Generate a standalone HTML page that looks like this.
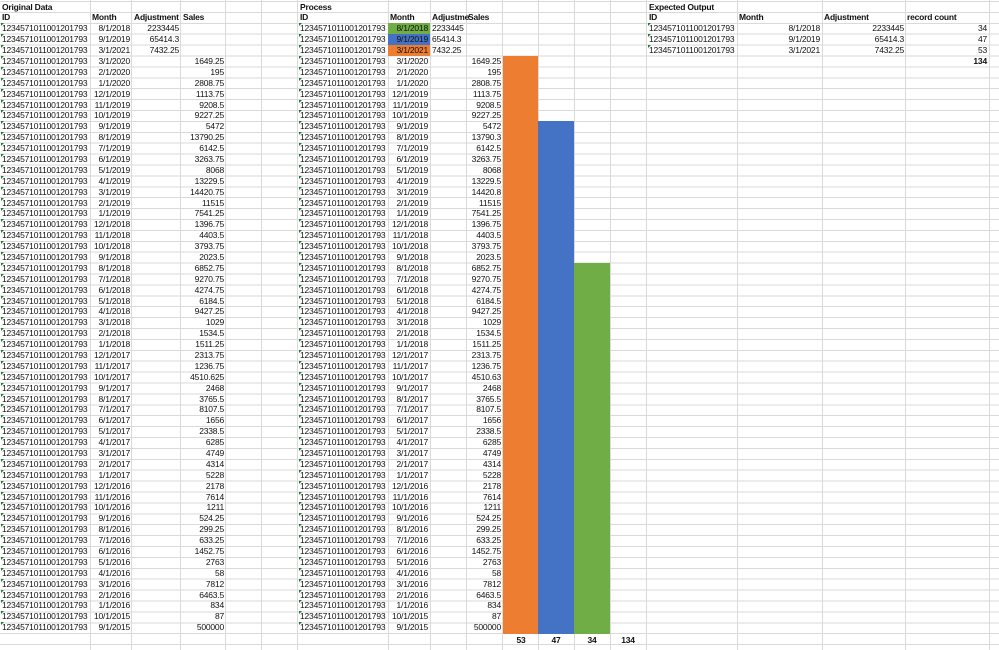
<!DOCTYPE html>
<html><head><meta charset="utf-8"><style>
*{margin:0;padding:0;box-sizing:border-box}
body{width:999px;height:650px;overflow:hidden;background:#fff;position:relative;font-family:"Liberation Sans",Arial,sans-serif;font-size:8.5px;color:#111;letter-spacing:-0.2px}
#grid{position:absolute;left:0;top:0;width:999px;height:650px;background-image:repeating-linear-gradient(to bottom,#dadada 0 1px,transparent 1px 10.9px);background-position:0 1px}
.v{position:absolute;top:0;width:1px;height:650px;background:#dadada}
.bar{position:absolute}
#rows{position:absolute;left:0;top:1.5px;width:999px}
.r{position:relative;height:10.9px;line-height:11px}
.r i{position:absolute;font-style:normal;white-space:nowrap;top:0}
.a{left:2px}.g{left:300px}.o{left:649px}
.a::before,.g::before,.o::before{content:"";position:absolute;left:-1px;top:0;border-top:3px solid #1e7b34;border-right:3px solid transparent}
.b{right:869px}.c{right:820px}.d{right:775px}
.h{right:571px}.i{left:432px}.j{right:498px}
.p{right:179px}.q{right:95px}.s{right:12px}
.bd{font-weight:bold}
.cell{position:absolute;top:0;height:10.9px}
.t{position:absolute;font-weight:bold;width:36px;text-align:center}
</style></head><body>
<div id="grid"></div>
<div class="v" style="left:90px"></div><div class="v" style="left:131px"></div><div class="v" style="left:180px"></div><div class="v" style="left:225px"></div><div class="v" style="left:261px"></div><div class="v" style="left:297px"></div><div class="v" style="left:388px"></div><div class="v" style="left:430px"></div><div class="v" style="left:466px"></div><div class="v" style="left:502px"></div><div class="v" style="left:538px"></div><div class="v" style="left:574px"></div><div class="v" style="left:610px"></div><div class="v" style="left:646px"></div><div class="v" style="left:737px"></div><div class="v" style="left:822px"></div><div class="v" style="left:905px"></div><div class="v" style="left:989px"></div>
<div class="bar" style="left:388px;top:23.3px;width:42px;height:10.9px;background:#70ad47"></div>
<div class="bar" style="left:388px;top:34.2px;width:42px;height:10.9px;background:#4472c4"></div>
<div class="bar" style="left:388px;top:45.1px;width:42px;height:10.9px;background:#ed7d31"></div>
<div class="bar" style="left:503px;top:56px;width:35px;height:578px;background:#ed7d31"></div>
<div class="bar" style="left:538px;top:121.4px;width:36px;height:512.6px;background:#4472c4"></div>
<div class="bar" style="left:574px;top:263px;width:36px;height:371px;background:#70ad47"></div>
<div id="rows">
<div class="r"><i class="bd" style="left:2px">Original Data</i><i class="bd" style="left:300px">Process</i><i class="bd" style="left:649px">Expected Output</i></div>
<div class="r"><i class="bd" style="left:2px">ID</i><i class="bd" style="left:92px">Month</i><i class="bd" style="left:134px">Adjustment</i><i class="bd" style="left:183px">Sales</i><i class="bd" style="left:300px">ID</i><i class="bd" style="left:390px">Month</i><i class="bd" style="left:432px">Adjustme</i><i class="bd" style="left:468px">Sales</i><i class="bd" style="left:649px">ID</i><i class="bd" style="left:739px">Month</i><i class="bd" style="left:824px">Adjustment</i><i class="bd" style="left:907px">record count</i></div>
<div class="r"><i class="a">1234571011001201793</i><i class="b">8/1/2018</i><i class="c">2233445</i><i class="g">1234571011001201793</i><i class="h">8/1/2018</i><i class="i">2233445</i><i class="o">1234571011001201793</i><i class="p">8/1/2018</i><i class="q">2233445</i><i class="s">34</i></div>
<div class="r"><i class="a">1234571011001201793</i><i class="b">9/1/2019</i><i class="c">65414.3</i><i class="g">1234571011001201793</i><i class="h">9/1/2019</i><i class="i">65414.3</i><i class="o">1234571011001201793</i><i class="p">9/1/2019</i><i class="q">65414.3</i><i class="s">47</i></div>
<div class="r"><i class="a">1234571011001201793</i><i class="b">3/1/2021</i><i class="c">7432.25</i><i class="g">1234571011001201793</i><i class="h">3/1/2021</i><i class="i">7432.25</i><i class="o">1234571011001201793</i><i class="p">3/1/2021</i><i class="q">7432.25</i><i class="s">53</i></div>
<div class="r"><i class="a">1234571011001201793</i><i class="b">3/1/2020</i><i class="d">1649.25</i><i class="g">1234571011001201793</i><i class="h">3/1/2020</i><i class="j">1649.25</i><i class="s bd">134</i></div>
<div class="r"><i class="a">1234571011001201793</i><i class="b">2/1/2020</i><i class="d">195</i><i class="g">1234571011001201793</i><i class="h">2/1/2020</i><i class="j">195</i></div>
<div class="r"><i class="a">1234571011001201793</i><i class="b">1/1/2020</i><i class="d">2808.75</i><i class="g">1234571011001201793</i><i class="h">1/1/2020</i><i class="j">2808.75</i></div>
<div class="r"><i class="a">1234571011001201793</i><i class="b">12/1/2019</i><i class="d">1113.75</i><i class="g">1234571011001201793</i><i class="h">12/1/2019</i><i class="j">1113.75</i></div>
<div class="r"><i class="a">1234571011001201793</i><i class="b">11/1/2019</i><i class="d">9208.5</i><i class="g">1234571011001201793</i><i class="h">11/1/2019</i><i class="j">9208.5</i></div>
<div class="r"><i class="a">1234571011001201793</i><i class="b">10/1/2019</i><i class="d">9227.25</i><i class="g">1234571011001201793</i><i class="h">10/1/2019</i><i class="j">9227.25</i></div>
<div class="r"><i class="a">1234571011001201793</i><i class="b">9/1/2019</i><i class="d">5472</i><i class="g">1234571011001201793</i><i class="h">9/1/2019</i><i class="j">5472</i></div>
<div class="r"><i class="a">1234571011001201793</i><i class="b">8/1/2019</i><i class="d">13790.25</i><i class="g">1234571011001201793</i><i class="h">8/1/2019</i><i class="j">13790.3</i></div>
<div class="r"><i class="a">1234571011001201793</i><i class="b">7/1/2019</i><i class="d">6142.5</i><i class="g">1234571011001201793</i><i class="h">7/1/2019</i><i class="j">6142.5</i></div>
<div class="r"><i class="a">1234571011001201793</i><i class="b">6/1/2019</i><i class="d">3263.75</i><i class="g">1234571011001201793</i><i class="h">6/1/2019</i><i class="j">3263.75</i></div>
<div class="r"><i class="a">1234571011001201793</i><i class="b">5/1/2019</i><i class="d">8068</i><i class="g">1234571011001201793</i><i class="h">5/1/2019</i><i class="j">8068</i></div>
<div class="r"><i class="a">1234571011001201793</i><i class="b">4/1/2019</i><i class="d">13229.5</i><i class="g">1234571011001201793</i><i class="h">4/1/2019</i><i class="j">13229.5</i></div>
<div class="r"><i class="a">1234571011001201793</i><i class="b">3/1/2019</i><i class="d">14420.75</i><i class="g">1234571011001201793</i><i class="h">3/1/2019</i><i class="j">14420.8</i></div>
<div class="r"><i class="a">1234571011001201793</i><i class="b">2/1/2019</i><i class="d">11515</i><i class="g">1234571011001201793</i><i class="h">2/1/2019</i><i class="j">11515</i></div>
<div class="r"><i class="a">1234571011001201793</i><i class="b">1/1/2019</i><i class="d">7541.25</i><i class="g">1234571011001201793</i><i class="h">1/1/2019</i><i class="j">7541.25</i></div>
<div class="r"><i class="a">1234571011001201793</i><i class="b">12/1/2018</i><i class="d">1396.75</i><i class="g">1234571011001201793</i><i class="h">12/1/2018</i><i class="j">1396.75</i></div>
<div class="r"><i class="a">1234571011001201793</i><i class="b">11/1/2018</i><i class="d">4403.5</i><i class="g">1234571011001201793</i><i class="h">11/1/2018</i><i class="j">4403.5</i></div>
<div class="r"><i class="a">1234571011001201793</i><i class="b">10/1/2018</i><i class="d">3793.75</i><i class="g">1234571011001201793</i><i class="h">10/1/2018</i><i class="j">3793.75</i></div>
<div class="r"><i class="a">1234571011001201793</i><i class="b">9/1/2018</i><i class="d">2023.5</i><i class="g">1234571011001201793</i><i class="h">9/1/2018</i><i class="j">2023.5</i></div>
<div class="r"><i class="a">1234571011001201793</i><i class="b">8/1/2018</i><i class="d">6852.75</i><i class="g">1234571011001201793</i><i class="h">8/1/2018</i><i class="j">6852.75</i></div>
<div class="r"><i class="a">1234571011001201793</i><i class="b">7/1/2018</i><i class="d">9270.75</i><i class="g">1234571011001201793</i><i class="h">7/1/2018</i><i class="j">9270.75</i></div>
<div class="r"><i class="a">1234571011001201793</i><i class="b">6/1/2018</i><i class="d">4274.75</i><i class="g">1234571011001201793</i><i class="h">6/1/2018</i><i class="j">4274.75</i></div>
<div class="r"><i class="a">1234571011001201793</i><i class="b">5/1/2018</i><i class="d">6184.5</i><i class="g">1234571011001201793</i><i class="h">5/1/2018</i><i class="j">6184.5</i></div>
<div class="r"><i class="a">1234571011001201793</i><i class="b">4/1/2018</i><i class="d">9427.25</i><i class="g">1234571011001201793</i><i class="h">4/1/2018</i><i class="j">9427.25</i></div>
<div class="r"><i class="a">1234571011001201793</i><i class="b">3/1/2018</i><i class="d">1029</i><i class="g">1234571011001201793</i><i class="h">3/1/2018</i><i class="j">1029</i></div>
<div class="r"><i class="a">1234571011001201793</i><i class="b">2/1/2018</i><i class="d">1534.5</i><i class="g">1234571011001201793</i><i class="h">2/1/2018</i><i class="j">1534.5</i></div>
<div class="r"><i class="a">1234571011001201793</i><i class="b">1/1/2018</i><i class="d">1511.25</i><i class="g">1234571011001201793</i><i class="h">1/1/2018</i><i class="j">1511.25</i></div>
<div class="r"><i class="a">1234571011001201793</i><i class="b">12/1/2017</i><i class="d">2313.75</i><i class="g">1234571011001201793</i><i class="h">12/1/2017</i><i class="j">2313.75</i></div>
<div class="r"><i class="a">1234571011001201793</i><i class="b">11/1/2017</i><i class="d">1236.75</i><i class="g">1234571011001201793</i><i class="h">11/1/2017</i><i class="j">1236.75</i></div>
<div class="r"><i class="a">1234571011001201793</i><i class="b">10/1/2017</i><i class="d">4510.625</i><i class="g">1234571011001201793</i><i class="h">10/1/2017</i><i class="j">4510.63</i></div>
<div class="r"><i class="a">1234571011001201793</i><i class="b">9/1/2017</i><i class="d">2468</i><i class="g">1234571011001201793</i><i class="h">9/1/2017</i><i class="j">2468</i></div>
<div class="r"><i class="a">1234571011001201793</i><i class="b">8/1/2017</i><i class="d">3765.5</i><i class="g">1234571011001201793</i><i class="h">8/1/2017</i><i class="j">3765.5</i></div>
<div class="r"><i class="a">1234571011001201793</i><i class="b">7/1/2017</i><i class="d">8107.5</i><i class="g">1234571011001201793</i><i class="h">7/1/2017</i><i class="j">8107.5</i></div>
<div class="r"><i class="a">1234571011001201793</i><i class="b">6/1/2017</i><i class="d">1656</i><i class="g">1234571011001201793</i><i class="h">6/1/2017</i><i class="j">1656</i></div>
<div class="r"><i class="a">1234571011001201793</i><i class="b">5/1/2017</i><i class="d">2338.5</i><i class="g">1234571011001201793</i><i class="h">5/1/2017</i><i class="j">2338.5</i></div>
<div class="r"><i class="a">1234571011001201793</i><i class="b">4/1/2017</i><i class="d">6285</i><i class="g">1234571011001201793</i><i class="h">4/1/2017</i><i class="j">6285</i></div>
<div class="r"><i class="a">1234571011001201793</i><i class="b">3/1/2017</i><i class="d">4749</i><i class="g">1234571011001201793</i><i class="h">3/1/2017</i><i class="j">4749</i></div>
<div class="r"><i class="a">1234571011001201793</i><i class="b">2/1/2017</i><i class="d">4314</i><i class="g">1234571011001201793</i><i class="h">2/1/2017</i><i class="j">4314</i></div>
<div class="r"><i class="a">1234571011001201793</i><i class="b">1/1/2017</i><i class="d">5228</i><i class="g">1234571011001201793</i><i class="h">1/1/2017</i><i class="j">5228</i></div>
<div class="r"><i class="a">1234571011001201793</i><i class="b">12/1/2016</i><i class="d">2178</i><i class="g">1234571011001201793</i><i class="h">12/1/2016</i><i class="j">2178</i></div>
<div class="r"><i class="a">1234571011001201793</i><i class="b">11/1/2016</i><i class="d">7614</i><i class="g">1234571011001201793</i><i class="h">11/1/2016</i><i class="j">7614</i></div>
<div class="r"><i class="a">1234571011001201793</i><i class="b">10/1/2016</i><i class="d">1211</i><i class="g">1234571011001201793</i><i class="h">10/1/2016</i><i class="j">1211</i></div>
<div class="r"><i class="a">1234571011001201793</i><i class="b">9/1/2016</i><i class="d">524.25</i><i class="g">1234571011001201793</i><i class="h">9/1/2016</i><i class="j">524.25</i></div>
<div class="r"><i class="a">1234571011001201793</i><i class="b">8/1/2016</i><i class="d">299.25</i><i class="g">1234571011001201793</i><i class="h">8/1/2016</i><i class="j">299.25</i></div>
<div class="r"><i class="a">1234571011001201793</i><i class="b">7/1/2016</i><i class="d">633.25</i><i class="g">1234571011001201793</i><i class="h">7/1/2016</i><i class="j">633.25</i></div>
<div class="r"><i class="a">1234571011001201793</i><i class="b">6/1/2016</i><i class="d">1452.75</i><i class="g">1234571011001201793</i><i class="h">6/1/2016</i><i class="j">1452.75</i></div>
<div class="r"><i class="a">1234571011001201793</i><i class="b">5/1/2016</i><i class="d">2763</i><i class="g">1234571011001201793</i><i class="h">5/1/2016</i><i class="j">2763</i></div>
<div class="r"><i class="a">1234571011001201793</i><i class="b">4/1/2016</i><i class="d">58</i><i class="g">1234571011001201793</i><i class="h">4/1/2016</i><i class="j">58</i></div>
<div class="r"><i class="a">1234571011001201793</i><i class="b">3/1/2016</i><i class="d">7812</i><i class="g">1234571011001201793</i><i class="h">3/1/2016</i><i class="j">7812</i></div>
<div class="r"><i class="a">1234571011001201793</i><i class="b">2/1/2016</i><i class="d">6463.5</i><i class="g">1234571011001201793</i><i class="h">2/1/2016</i><i class="j">6463.5</i></div>
<div class="r"><i class="a">1234571011001201793</i><i class="b">1/1/2016</i><i class="d">834</i><i class="g">1234571011001201793</i><i class="h">1/1/2016</i><i class="j">834</i></div>
<div class="r"><i class="a">1234571011001201793</i><i class="b">10/1/2015</i><i class="d">87</i><i class="g">1234571011001201793</i><i class="h">10/1/2015</i><i class="j">87</i></div>
<div class="r"><i class="a">1234571011001201793</i><i class="b">9/1/2015</i><i class="d">500000</i><i class="g">1234571011001201793</i><i class="h">9/1/2015</i><i class="j">500000</i></div>
</div>
<div class="t" style="left:503px;top:635px;line-height:11px">53</div>
<div class="t" style="left:538px;top:635px;line-height:11px">47</div>
<div class="t" style="left:574px;top:635px;line-height:11px">34</div>
<div class="t" style="left:610px;top:635px;line-height:11px">134</div>
</body></html>
